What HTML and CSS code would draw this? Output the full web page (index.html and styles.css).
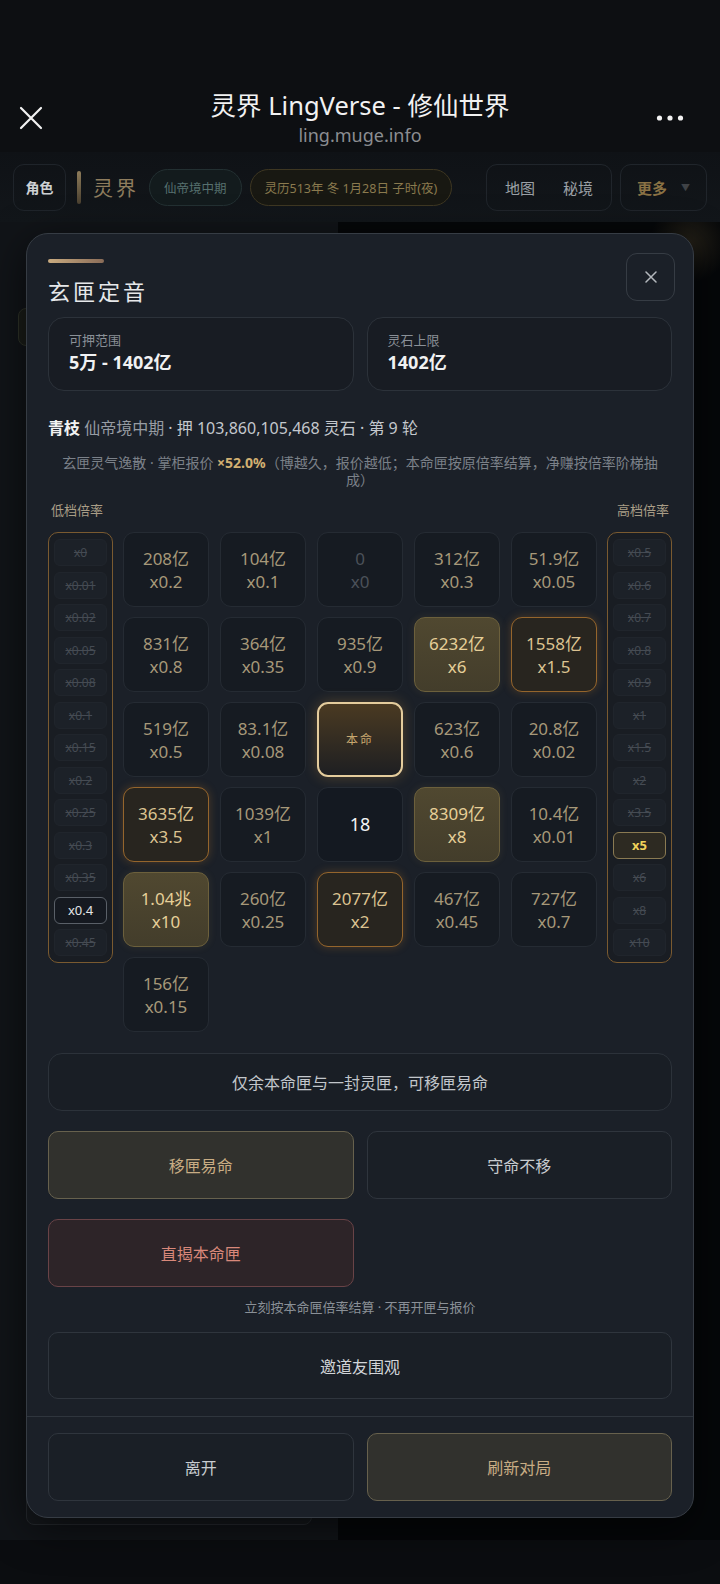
FILE: index.html
```html
<!DOCTYPE html>
<html lang="zh-CN">
<head>
    <meta charset="UTF-8">
    <title>灵界 LingVerse - 修仙世界</title>
    <link rel="stylesheet" href="styles.css">
</head>
<body>
    <div class="chrome">
        <div class="chrome-row">
            <svg class="chrome-close" width="24" height="24" viewBox="0 0 24 24">
                <path d="M2 2 L22 22 M22 2 L2 22" stroke="#f2f2f2" stroke-width="2.2" stroke-linecap="round" fill="none"/>
            </svg>
            <div class="chrome-title">
                <div class="page-title">灵界 LingVerse - 修仙世界</div>
                <div class="page-url">ling.muge.info</div>
            </div>
            <svg class="chrome-more" width="28" height="8" viewBox="0 0 28 8">
                <circle cx="3.5" cy="4" r="2.6" fill="#f2f2f2"/>
                <circle cx="14" cy="4" r="2.6" fill="#f2f2f2"/>
                <circle cx="24.5" cy="4" r="2.6" fill="#f2f2f2"/>
            </svg>
        </div>
    </div>

    <div class="appbar">
        <div class="nav-btn role">角色</div>
        <div class="brand-bar"></div>
        <div class="brand">灵界</div>
        <div class="pill realm">仙帝境中期</div>
        <div class="pill calendar">灵历513年 冬 1月28日 子时(夜)</div>
        <div class="nav-group">
            <span>地图</span>
            <span>秘境</span>
        </div>
        <div class="nav-group more">
            <span>更多</span>
            <span class="caret">▼</span>
        </div>
    </div>

    <div class="stage">
        <div class="stage-left">
            <div class="peek-tab"></div>
            <div class="peek-card"></div>
        </div>
        <div class="stage-right"></div>
    </div>

    <div class="modal">
        <div class="modal-body">
            <div class="accent"></div>
            <div class="modal-title">玄匣定音</div>
            <div class="close-btn">
                <svg width="12" height="12" viewBox="0 0 12 12">
                    <path d="M1 1 L11 11 M11 1 L1 11" stroke="#b4b8bd" stroke-width="1.5" stroke-linecap="round" fill="none"/>
                </svg>
            </div>

            <div class="stats">
                <div class="stat">
                    <div class="stat-label">可押范围</div>
                    <div class="stat-value">5万 - 1402亿</div>
                </div>
                <div class="stat">
                    <div class="stat-label">灵石上限</div>
                    <div class="stat-value">1402亿</div>
                </div>
            </div>

            <div class="player-line">
                <strong>青枝</strong> <span class="realm-name">仙帝境中期</span> · 押 103,860,105,468 灵石 · 第 9 轮
            </div>
            <div class="desc">玄匣灵气逸散 · 掌柜报价 <b>×52.0%</b>（博越久，报价越低；本命匣按原倍率结算，净赚按倍率阶梯抽成）</div>

            <div class="tier-labels">
                <span>低档倍率</span>
                <span>高档倍率</span>
            </div>

            <div class="board">
                <div class="tier-col">
                    <div class="tier used">x0</div>
                    <div class="tier used">x0.01</div>
                    <div class="tier used">x0.02</div>
                    <div class="tier used">x0.05</div>
                    <div class="tier used">x0.08</div>
                    <div class="tier used">x0.1</div>
                    <div class="tier used">x0.15</div>
                    <div class="tier used">x0.2</div>
                    <div class="tier used">x0.25</div>
                    <div class="tier used">x0.3</div>
                    <div class="tier used">x0.35</div>
                    <div class="tier left-open">x0.4</div>
                    <div class="tier used">x0.45</div>
                </div>

                <div class="grid">
                    <div class="cell"><span>208亿</span><span>x0.2</span></div>
                    <div class="cell"><span>104亿</span><span>x0.1</span></div>
                    <div class="cell dim"><span>0</span><span>x0</span></div>
                    <div class="cell"><span>312亿</span><span>x0.3</span></div>
                    <div class="cell"><span>51.9亿</span><span>x0.05</span></div>

                    <div class="cell"><span>831亿</span><span>x0.8</span></div>
                    <div class="cell"><span>364亿</span><span>x0.35</span></div>
                    <div class="cell"><span>935亿</span><span>x0.9</span></div>
                    <div class="cell gold"><span>6232亿</span><span>x6</span></div>
                    <div class="cell warm"><span>1558亿</span><span>x1.5</span></div>

                    <div class="cell"><span>519亿</span><span>x0.5</span></div>
                    <div class="cell"><span>83.1亿</span><span>x0.08</span></div>
                    <div class="cell own"><span>本命</span></div>
                    <div class="cell"><span>623亿</span><span>x0.6</span></div>
                    <div class="cell"><span>20.8亿</span><span>x0.02</span></div>

                    <div class="cell warm"><span>3635亿</span><span>x3.5</span></div>
                    <div class="cell"><span>1039亿</span><span>x1</span></div>
                    <div class="cell sealed"><span>18</span></div>
                    <div class="cell gold"><span>8309亿</span><span>x8</span></div>
                    <div class="cell"><span>10.4亿</span><span>x0.01</span></div>

                    <div class="cell gold"><span>1.04兆</span><span>x10</span></div>
                    <div class="cell"><span>260亿</span><span>x0.25</span></div>
                    <div class="cell warm"><span>2077亿</span><span>x2</span></div>
                    <div class="cell"><span>467亿</span><span>x0.45</span></div>
                    <div class="cell"><span>727亿</span><span>x0.7</span></div>

                    <div class="cell"><span>156亿</span><span>x0.15</span></div>
                </div>

                <div class="tier-col">
                    <div class="tier used">x0.5</div>
                    <div class="tier used">x0.6</div>
                    <div class="tier used">x0.7</div>
                    <div class="tier used">x0.8</div>
                    <div class="tier used">x0.9</div>
                    <div class="tier used">x1</div>
                    <div class="tier used">x1.5</div>
                    <div class="tier used">x2</div>
                    <div class="tier used">x3.5</div>
                    <div class="tier high-open">x5</div>
                    <div class="tier used">x6</div>
                    <div class="tier used">x8</div>
                    <div class="tier used">x10</div>
                </div>
            </div>

            <div class="notice">仅余本命匣与一封灵匣，可移匣易命</div>

            <div class="btn-row">
                <div class="btn olive">移匣易命</div>
                <div class="btn">守命不移</div>
            </div>
            <div class="btn-row">
                <div class="btn danger">直揭本命匣</div>
            </div>
            <div class="caption">立刻按本命匣倍率结算 · 不再开匣与报价</div>
            <div class="btn wide">邀道友围观</div>
        </div>

        <div class="modal-foot">
            <div class="btn">离开</div>
            <div class="btn olive">刷新对局</div>
        </div>
    </div>
</body>
</html>
```

FILE: styles.css
```css
* {
    box-sizing: border-box;
}
body {
    margin: 0;
    width: 720px;
    height: 1584px;
    overflow: hidden;
    position: relative;
    background-color: #0b0d10;
    font-family: "Noto Sans", "Noto Sans CJK SC", sans-serif;
    color: #c6cacf;
}

/* browser chrome */
.chrome {
    height: 152px;
    padding-top: 88px;
    background-color: #0d0f12;
}
.chrome-row {
    display: grid;
    grid-template-columns: 1fr auto 1fr;
    align-items: center;
    padding: 0 36px;
}
.chrome-close {
    display: block;
    margin-left: -17px;
}
.chrome-title {
    text-align: center;
}
.page-title {
    font-size: 25.5px;
    line-height: 34px;
    color: #f2f2f2;
}
.page-url {
    font-size: 18px;
    line-height: 26px;
    color: #8b8d91;
}
.chrome-more {
    display: block;
    justify-self: end;
}

/* app header */
.appbar {
    height: 70px;
    display: flex;
    align-items: center;
    padding: 0 13px;
    background: linear-gradient(#0f1216, #12161a);
}
.nav-btn {
    height: 47px;
    border: 1px solid #1f242a;
    border-radius: 11px;
    display: flex;
    align-items: center;
    justify-content: center;
}
.role {
    width: 53px;
    font-size: 14px;
    font-weight: bold;
    color: #cdd0d3;
}
.brand-bar {
    width: 4px;
    height: 33px;
    border-radius: 2px;
    margin-left: 11px;
    background: linear-gradient(#8e7c5a, #4a4030);
}
.brand {
    margin-left: 12px;
    font-size: 20px;
    letter-spacing: 3px;
    color: #8e7d5e;
}
.pill {
    height: 37px;
    border-radius: 19px;
    padding: 0 14px;
    display: flex;
    align-items: center;
    font-size: 12.5px;
}
.realm {
    margin-left: 10px;
    border: 1px solid #233032;
    background-color: #131b1d;
    color: #56706e;
}
.calendar {
    margin-left: 8px;
    border: 1px solid #3e3722;
    background-color: #181812;
    color: #8a7a4e;
}
.nav-group {
    height: 47px;
    border: 1px solid #20252b;
    border-radius: 11px;
    display: flex;
    align-items: center;
    gap: 28px;
    padding: 0 18px;
    font-size: 15px;
    color: #9ba0a6;
    margin-left: auto;
}
.nav-group.more {
    margin-left: 8px;
    gap: 14px;
    padding: 0 16px 0 16px;
    font-weight: bold;
    color: #8a7244;
}
.caret {
    font-size: 9px;
    color: #3f4246;
}

/* page behind the modal */
.stage {
    display: flex;
    height: 1318px;
}
.stage-left {
    width: 338px;
    background-color: #111418;
    position: relative;
}
.stage-right {
    flex: 1;
    background: radial-gradient(circle at 352px 20px, rgba(120, 100, 60, 0.25), rgba(0, 0, 0, 0) 40px), #050709;
}
.peek-tab {
    position: absolute;
    left: 18px;
    top: 86px;
    width: 30px;
    height: 38px;
    border: 1px solid #2e3228;
    border-radius: 8px;
    background-color: #1a1c18;
}
.peek-card {
    position: absolute;
    left: 26px;
    bottom: 15px;
    width: 286px;
    height: 60px;
    border: 1px solid #262a2f;
    border-radius: 0 0 8px 8px;
    background-color: #15181c;
}

/* modal */
.modal {
    position: absolute;
    left: 26px;
    top: 233px;
    width: 668px;
    height: 1285px;
    background-color: #1b2028;
    border: 1px solid #363c44;
    border-radius: 22px;
    box-shadow: 0 10px 40px rgba(0, 0, 0, 0.6);
    display: flex;
    flex-direction: column;
}
.modal-body {
    position: relative;
    flex: 1;
    padding: 25px 21px 0;
}
.accent {
    width: 56px;
    height: 4px;
    border-radius: 2px;
    background: linear-gradient(90deg, #c9ab80, #8a6c58);
}
.modal-title {
    margin-top: 13px;
    font-size: 22px;
    line-height: 30px;
    letter-spacing: 3px;
    color: #e6e8ea;
}
.close-btn {
    position: absolute;
    top: 19px;
    right: 18px;
    width: 49px;
    height: 48px;
    border: 1px solid #363c44;
    border-radius: 11px;
    display: flex;
    align-items: center;
    justify-content: center;
}
.stats {
    margin-top: 11px;
    display: grid;
    grid-template-columns: 1fr 1fr;
    gap: 13px;
}
.stat {
    height: 74px;
    border: 1px solid #2c323a;
    border-radius: 16px;
    background-color: #181c23;
    padding: 13px 20px 0;
}
.stat-label {
    font-size: 13px;
    line-height: 18px;
    color: #8a9097;
}
.stat-value {
    font-size: 18px;
    line-height: 26px;
    font-weight: bold;
    color: #f0f1f2;
}
.player-line {
    margin-top: 26px;
    font-size: 16px;
    line-height: 22px;
    color: #c4c8cd;
}
.player-line strong {
    color: #f2f2f2;
}
.realm-name {
    color: #979ca3;
}
.desc {
    margin: 15px 8px 0;
    text-align: center;
    font-size: 14px;
    line-height: 17px;
    color: #7b8189;
}
.desc b {
    color: #d2b072;
}
.tier-labels {
    margin-top: 13px;
    display: flex;
    justify-content: space-between;
    padding: 0 3px;
    font-size: 13px;
    line-height: 18px;
    color: #a99d86;
}

/* board */
.board {
    margin-top: 13px;
    display: flex;
    align-items: flex-start;
    gap: 10px;
}
.tier-col {
    width: 65px;
    flex: none;
    display: flex;
    flex-direction: column;
    gap: 5.5px;
    padding: 6px 5px;
    border: 1px solid #7a5a30;
    border-radius: 10px;
    background-color: #191d23;
}
.tier {
    height: 27px;
    border: 1px solid #20252c;
    border-radius: 6px;
    background-color: #1c2128;
    display: flex;
    align-items: center;
    justify-content: center;
    font-size: 12px;
    color: #454b53;
}
.tier.used {
    text-decoration: line-through;
}
.tier.left-open {
    background-color: #151920;
    border-color: #5a6068;
    color: #e4e6e8;
    font-size: 13px;
}
.tier.high-open {
    background-color: #2d2a22;
    border-color: #8a7a52;
    color: #f0d25a;
    font-size: 13px;
    font-weight: bold;
}
.grid {
    width: 474px;
    flex: none;
    display: grid;
    grid-template-columns: repeat(5, 86px);
    grid-auto-rows: 75px;
    gap: 10px 11px;
}
.cell {
    border: 1px solid #252b33;
    border-radius: 11px;
    background-color: #161b22;
    display: flex;
    flex-direction: column;
    align-items: center;
    justify-content: center;
    font-size: 17px;
    line-height: 23px;
    color: #a69879;
}
.cell.dim {
    color: #4b5159;
}
.cell.gold {
    background: linear-gradient(#504830, #433d2b);
    border-color: #6c603c;
    color: #e6cf98;
    box-shadow: 0 0 8px rgba(190, 160, 80, 0.12);
}
.cell.warm {
    background-color: #28251f;
    border-color: #95652c;
    color: #dcc391;
    box-shadow: 0 0 10px rgba(210, 130, 40, 0.28);
}
.cell.own {
    background: linear-gradient(#4a3a22, #1e1f22);
    border: 2px solid #e4cc9c;
    color: #c8a870;
    font-size: 12px;
    letter-spacing: 2px;
    box-shadow: 0 0 14px rgba(210, 150, 60, 0.3);
}
.cell.sealed {
    background-color: #141921;
    color: #f2f3f5;
    font-size: 18px;
}

/* actions */
.notice {
    margin-top: 21px;
    height: 58px;
    border: 1px solid #2c323a;
    border-radius: 14px;
    background-color: #191e25;
    display: flex;
    align-items: center;
    justify-content: center;
    font-size: 16px;
    color: #c2c6cb;
}
.btn-row {
    margin-top: 20px;
    display: grid;
    grid-template-columns: 1fr 1fr;
    gap: 13px;
}
.btn {
    height: 68px;
    border: 1px solid #2f353d;
    border-radius: 10px;
    background-color: #1a1f26;
    display: flex;
    align-items: center;
    justify-content: center;
    font-size: 16px;
    color: #c8ccd0;
}
.btn.olive {
    background-color: #31312d;
    border-color: #67614d;
    color: #c9ad84;
}
.btn.danger {
    background-color: #2d2428;
    border-color: #694347;
    color: #d9887a;
}
.caption {
    margin-top: 11px;
    text-align: center;
    font-size: 13px;
    line-height: 18px;
    color: #8a9097;
}
.btn.wide {
    margin-top: 16px;
    height: 67px;
    color: #d2d5d9;
}
.modal-foot {
    border-top: 1px solid #2f353d;
    padding: 16px 21px 16px;
    display: grid;
    grid-template-columns: 1fr 1fr;
    gap: 13px;
}
```
